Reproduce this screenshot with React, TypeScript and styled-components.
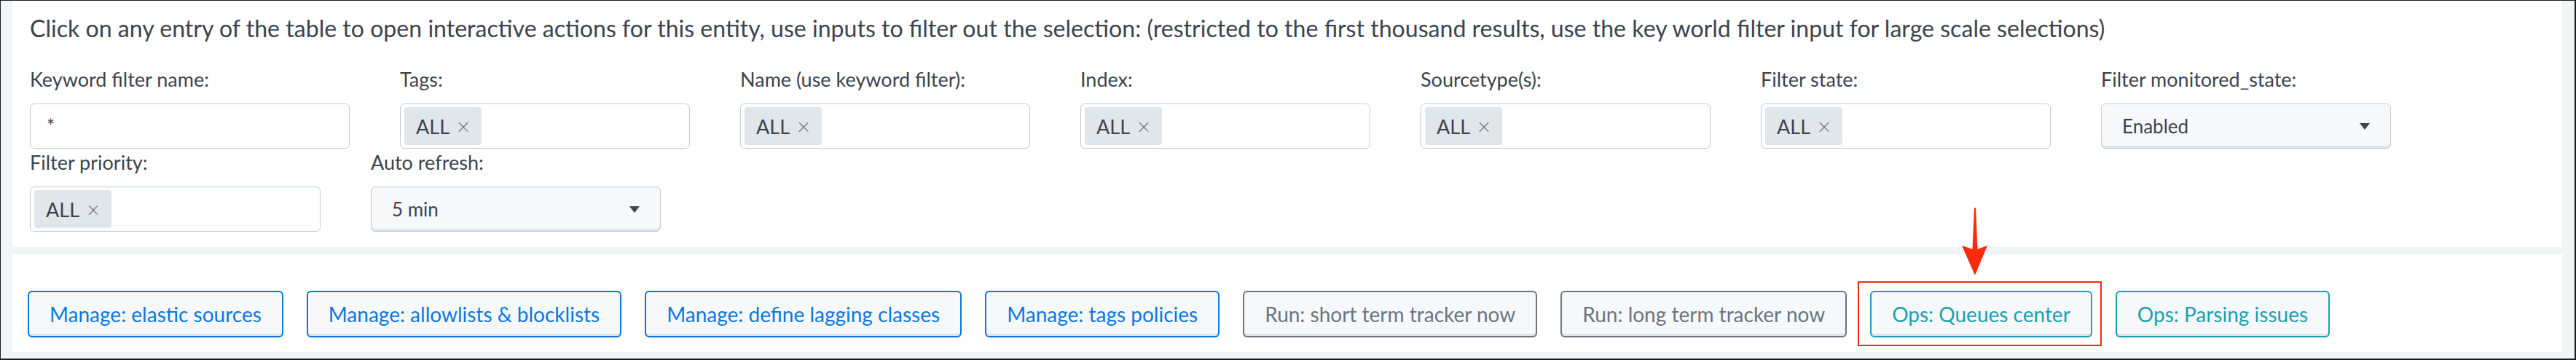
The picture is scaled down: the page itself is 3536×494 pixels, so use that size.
import React from "react";
import styled, { createGlobalStyle } from "styled-components";

const GlobalStyle = createGlobalStyle`
  html, body { margin: 0; padding: 0; background: #f2f4f5; overflow: hidden; }
  body { font-family: Lato, "Liberation Sans", sans-serif; color: #3c444d; }
  * { box-sizing: border-box; }
`;

const Frame = styled.div`
  width: 3536px;
  height: 494px;
  border-style: solid;
  border-color: #1b1c1d;
  border-width: 1px 2px 2px 1px;
  background: #f2f4f5;
  padding: 0 17px 9px 16px;
  display: flex;
  flex-direction: column;
  gap: 10px;
  overflow: hidden;
`;

const Panel = styled.section`
  background: #ffffff;
  padding: 16px 24px 21px 24px;
`;

const Intro = styled.p`
  margin: 0;
  font-size: 32.1px;
  line-height: 44px;
  color: #3c444d;
  white-space: nowrap;
`;

const Fields = styled.div`
  margin-top: 30px;
  display: flex;
  flex-wrap: wrap;
  column-gap: 69px;
  row-gap: 1px;
`;

const Field = styled.div<{ $w: number }>`
  width: ${(p) => p.$w}px;
  display: flex;
  flex-direction: column;
`;

const Label = styled.label`
  font-size: 27px;
  line-height: 36px;
  height: 36px;
  margin-bottom: 15px;
  color: #3c444d;
  white-space: nowrap;
`;

const Box = styled.div`
  height: 62px;
  border: 1px solid #c3cbd4;
  border-radius: 6px;
  background: #ffffff;
  display: flex;
  align-items: center;
  padding: 0 5px;
`;

const TextValue = styled.span`
  font-size: 26px;
  padding-left: 17px;
  color: #3c444d;
`;

const Chip = styled.span`
  height: 52px;
  padding: 0 16px;
  background: #e1e6eb;
  border-radius: 4px;
  display: inline-flex;
  align-items: center;
  gap: 10px;
  font-size: 27px;
  color: #3c444d;
`;

const ChipX = styled.span`
  color: #6b7785;
  font-size: 31px;
  font-weight: 300;
  line-height: 1;
`;

const Select = styled.div`
  height: 62px;
  border: 1px solid #c3cbd4;
  border-radius: 6px;
  background: #f7f8fa;
  box-shadow: inset 0 -3px 0 #e1e4e8;
  display: flex;
  align-items: center;
  justify-content: space-between;
  padding: 0 28px 0 28px;
  font-size: 26px;
  color: #3c444d;
`;

const Caret = styled.svg`
  width: 14px;
  height: 9px;
  fill: #3c444d;
`;

const ActionsPanel = styled.section`
  background: #ffffff;
  padding: 50px 21px 20px 21px;
  display: flex;
  gap: 32px;
  align-items: flex-start;
`;

const tones = {
  blue: "#0a78e2",
  grey: "#6b7580",
  teal: "#19a0b5",
} as const;

type Tone = keyof typeof tones;

const ActionButton = styled.button<{ $tone: Tone }>`
  height: 64px;
  padding: 0 28px;
  border: 2px solid ${(p) => tones[p.$tone]};
  border-radius: 6px;
  background: #f7f8fa;
  box-shadow: inset 0 -3px 0 #dfe2e6;
  color: ${(p) => tones[p.$tone]};
  font-family: Lato, "Liberation Sans", sans-serif;
  font-size: 28px;
  white-space: nowrap;
  cursor: pointer;
`;

const Highlight = styled.div`
  position: relative;
  display: flex;
`;

const RedBox = styled.div`
  position: absolute;
  top: -13px;
  bottom: -12px;
  left: -17px;
  right: -13px;
  border: 2px solid #f5290b;
  pointer-events: none;
`;

const Arrow = styled.svg`
  position: absolute;
  left: 124px;
  top: -114px;
  width: 40px;
  height: 92px;
  fill: #fb2a0c;
  pointer-events: none;
`;

const fieldsData: { label: string; w: number; kind: "text" | "chip" | "select"; value: string }[] = [
  { label: "Keyword filter name:", w: 439, kind: "text", value: "*" },
  { label: "Tags:", w: 398, kind: "chip", value: "ALL" },
  { label: "Name (use keyword filter):", w: 398, kind: "chip", value: "ALL" },
  { label: "Index:", w: 398, kind: "chip", value: "ALL" },
  { label: "Sourcetype(s):", w: 398, kind: "chip", value: "ALL" },
  { label: "Filter state:", w: 398, kind: "chip", value: "ALL" },
  { label: "Filter monitored_state:", w: 398, kind: "select", value: "Enabled" },
  { label: "Filter priority:", w: 399, kind: "chip", value: "ALL" },
  { label: "Auto refresh:", w: 398, kind: "select", value: "5 min" },
];

const buttons: { text: string; tone: Tone; highlight?: boolean }[] = [
  { text: "Manage: elastic sources", tone: "blue" },
  { text: "Manage: allowlists & blocklists", tone: "blue" },
  { text: "Manage: define lagging classes", tone: "blue" },
  { text: "Manage: tags policies", tone: "blue" },
  { text: "Run: short term tracker now", tone: "grey" },
  { text: "Run: long term tracker now", tone: "grey" },
  { text: "Ops: Queues center", tone: "teal", highlight: true },
  { text: "Ops: Parsing issues", tone: "teal" },
];

function FieldControl({ kind, value }: { kind: "text" | "chip" | "select"; value: string }) {
  if (kind === "text") {
    return (
      <Box>
        <TextValue>{value}</TextValue>
      </Box>
    );
  }
  if (kind === "chip") {
    return (
      <Box>
        <Chip>
          {value}
          <ChipX>×</ChipX>
        </Chip>
      </Box>
    );
  }
  return (
    <Select>
      <span>{value}</span>
      <Caret viewBox="0 0 14 9">
        <path d="M0 0 H14 L7 9 Z" />
      </Caret>
    </Select>
  );
}

export default function App() {
  return (
    <>
      <GlobalStyle />
      <Frame>
        <Panel>
          <Intro>
            Click on any entry of the table to open interactive actions for this entity, use inputs to filter out the
            selection: (restricted to the first thousand results, use the key world filter input for large scale
            selections)
          </Intro>
          <Fields>
            {fieldsData.map((f) => (
              <Field key={f.label} $w={f.w}>
                <Label>{f.label}</Label>
                <FieldControl kind={f.kind} value={f.value} />
              </Field>
            ))}
          </Fields>
        </Panel>
        <ActionsPanel>
          {buttons.map((b) =>
            b.highlight ? (
              <Highlight key={b.text}>
                <ActionButton $tone={b.tone}>{b.text}</ActionButton>
                <RedBox />
                <Arrow viewBox="0 0 40 92">
                  <path d="M19 0 L21 0 L23.5 57 L37 52 L20.6 91.5 L19.4 91.5 L2 52 L16.5 57 Z" />
                </Arrow>
              </Highlight>
            ) : (
              <ActionButton key={b.text} $tone={b.tone}>
                {b.text}
              </ActionButton>
            )
          )}
        </ActionsPanel>
      </Frame>
    </>
  );
}
